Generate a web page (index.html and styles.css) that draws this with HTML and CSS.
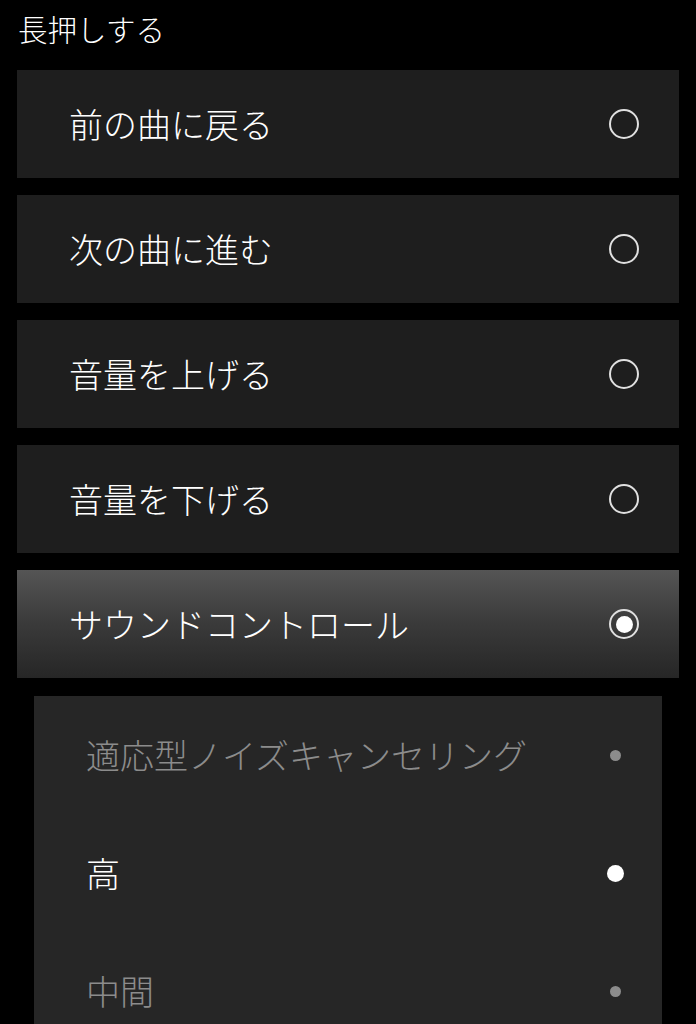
FILE: index.html
```html
<!DOCTYPE html>
<html lang="ja">
<head>
<meta charset="utf-8">
<link rel="stylesheet" href="styles.css">
</head>
<body>
<div class="page">
  <div class="header">長押しする</div>
  <div class="list">
    <div class="card"><span class="label">前の曲に戻る</span><span class="radio"></span></div>
    <div class="card"><span class="label">次の曲に進む</span><span class="radio"></span></div>
    <div class="card"><span class="label">音量を上げる</span><span class="radio"></span></div>
    <div class="card"><span class="label">音量を下げる</span><span class="radio"></span></div>
    <div class="card selected"><span class="label">サウンドコントロール</span><span class="radio on"></span></div>
    <div class="sub">
      <div class="subrow dim"><span class="label">適応型ノイズキャンセリング</span><span class="slot"><span class="dot"></span></span></div>
      <div class="subrow active"><span class="label">高</span><span class="slot"><span class="dot"></span></span></div>
      <div class="subrow dim"><span class="label">中間</span><span class="slot"><span class="dot"></span></span></div>
    </div>
  </div>
</div>
</body>
</html>
```

FILE: styles.css
```css
html, body {
  margin: 0;
  padding: 0;
  background: #000;
}
body {
  font-family: "Noto Sans CJK JP", "Noto Sans", sans-serif;
  color: #fff;
  width: 696px;
  height: 1024px;
  overflow: hidden;
}
.header {
  height: 70px;
  box-sizing: border-box;
  padding-left: 18px;
  display: flex;
  align-items: center;
  font-size: 29.5px;
  line-height: 1;
  padding-bottom: 12px;
  font-weight: 300;
}
.list {
  display: flex;
  flex-direction: column;
  gap: 17px;
  padding: 0 17px;
}
.card {
  height: 108px;
  background: #1e1e1e;
  display: flex;
  align-items: center;
  justify-content: space-between;
  padding: 0 40px 0 52px;
  box-sizing: border-box;
}
.card.selected {
  background: linear-gradient(to bottom, #555555 0%, #3a3a3a 50%, #262626 100%);
}
.label {
  font-size: 34px;
  line-height: 1;
  font-weight: 300;
}
.radio {
  width: 30px;
  height: 30px;
  box-sizing: border-box;
  border: 2px solid #e0e0e0;
  border-radius: 50%;
  display: flex;
  align-items: center;
  justify-content: center;
}
.radio.on::after {
  content: "";
  width: 17px;
  height: 17px;
  border-radius: 50%;
  background: #fff;
}
.sub {
  margin: 1px 17px 0;
  background: #262626;
  display: flex;
  flex-direction: column;
}
.subrow {
  height: 118px;
  display: flex;
  align-items: center;
  justify-content: space-between;
  padding: 0 35px 0 52px;
}
.subrow.dim { color: #8c8c8c; }
.subrow.active { color: #fff; }
.slot {
  width: 24px;
  height: 24px;
  display: flex;
  align-items: center;
  justify-content: center;
}
.dot {
  width: 11px;
  height: 11px;
  border-radius: 50%;
  background: #8c8c8c;
}
.active .dot {
  width: 17px;
  height: 17px;
  background: #fff;
}
```
